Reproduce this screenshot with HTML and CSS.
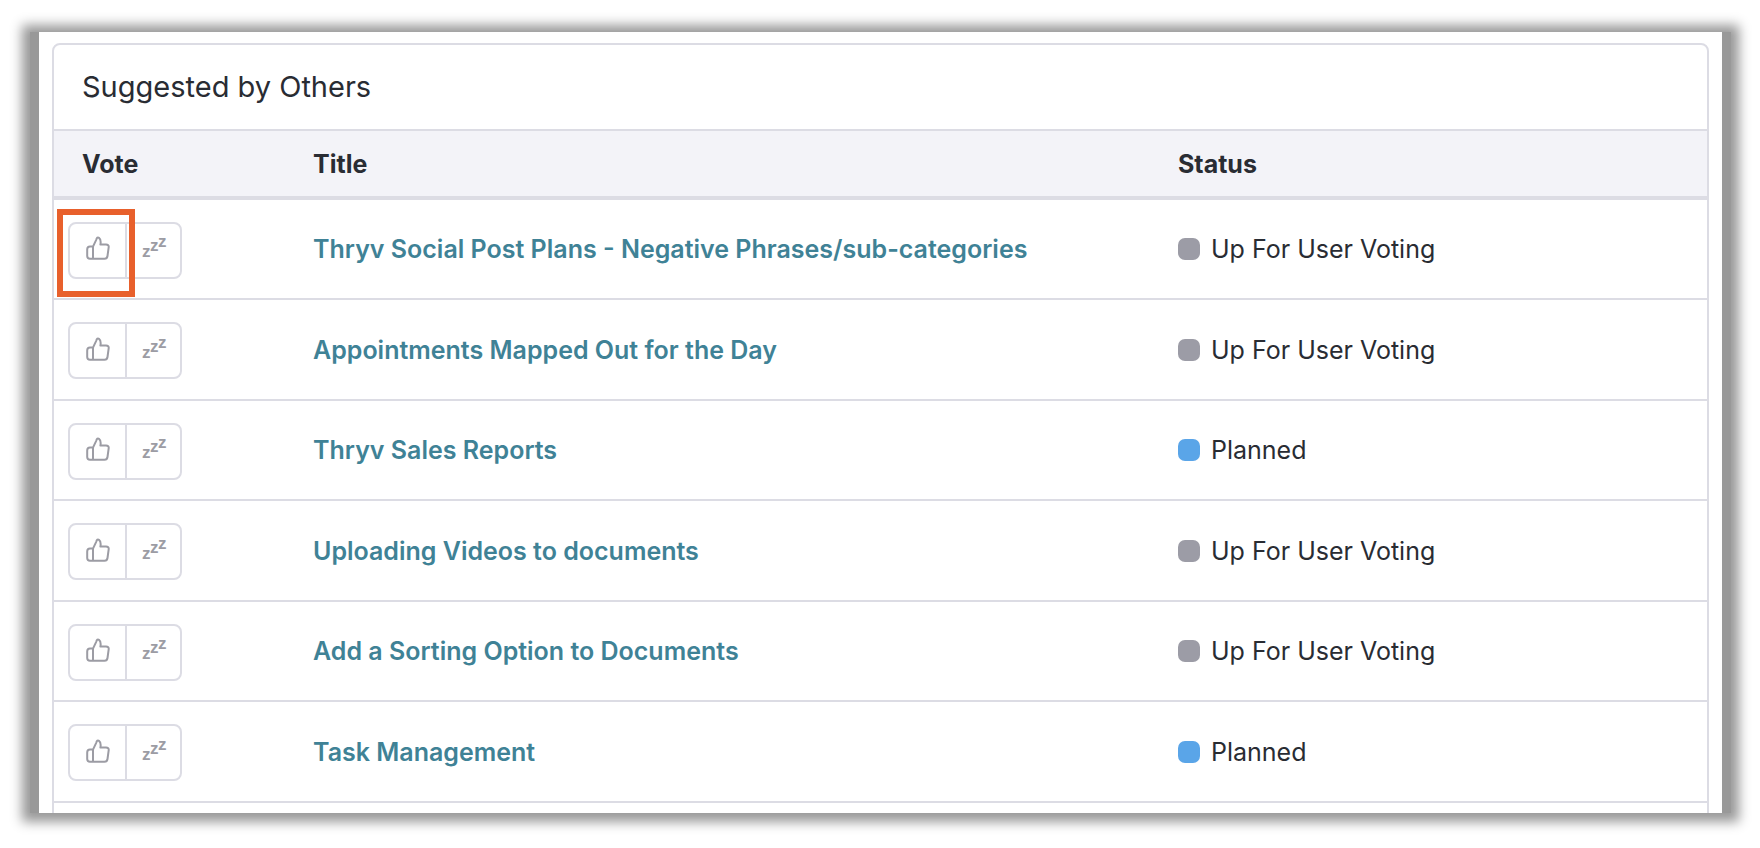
FILE: index.html
```html
<!DOCTYPE html>
<html lang="en">
<head>
    <meta charset="UTF-8">
    <meta name="viewport" content="width=device-width, initial-scale=1.0">
    <title>Suggested by Others</title>
    <link rel="stylesheet" href="styles.css">
</head>
<body>

    <!-- Thumb icon shared by every row -->
    <svg class="sprite" aria-hidden="true">
        <symbol id="thumb" viewBox="0 0 24 24">
            <path d="M7 10.6L10.3 3.6C10.8 1.6 11.8 1 13 1.8C14.8 3 15 5.2 14.4 8.6H20C22 8.6 22.9 9.6 22.7 11.2L21.5 20C21.2 22 20.3 22.7 18.5 22.7H4C2 22.7 1.2 21.7 1.2 20V13.4C1.2 11.4 2 10.6 4 10.6H7V22.7"/>
        </symbol>
    </svg>

    <main class="panel">
        <section class="card">
            <h1>Suggested by Others</h1>
            <table>
                <thead>
                    <tr>
                        <th class="col-vote">Vote</th>
                        <th>Title</th>
                        <th class="col-status">Status</th>
                    </tr>
                </thead>
                <tbody>
                    <tr>
                        <td class="vote">
                            <div class="vote-group highlighted">
                                <button type="button" aria-label="Vote up"><svg class="icon"><use href="#thumb"/></svg></button>
                                <button type="button" aria-label="Snooze"><svg class="icon zzz" viewBox="0 0 26 24"><text x="1" y="21">z</text><text x="9" y="15">z</text><text x="17" y="11">z</text></svg></button>
                            </div>
                        </td>
                        <td><a href="#">Thryv Social Post Plans - Negative Phrases/sub-categories</a></td>
                        <td><span class="status">Up For User Voting</span></td>
                    </tr>
                    <tr>
                        <td class="vote">
                            <div class="vote-group">
                                <button type="button" aria-label="Vote up"><svg class="icon"><use href="#thumb"/></svg></button>
                                <button type="button" aria-label="Snooze"><svg class="icon zzz" viewBox="0 0 26 24"><text x="1" y="21">z</text><text x="9" y="15">z</text><text x="17" y="11">z</text></svg></button>
                            </div>
                        </td>
                        <td><a href="#">Appointments Mapped Out for the Day</a></td>
                        <td><span class="status">Up For User Voting</span></td>
                    </tr>
                    <tr>
                        <td class="vote">
                            <div class="vote-group">
                                <button type="button" aria-label="Vote up"><svg class="icon"><use href="#thumb"/></svg></button>
                                <button type="button" aria-label="Snooze"><svg class="icon zzz" viewBox="0 0 26 24"><text x="1" y="21">z</text><text x="9" y="15">z</text><text x="17" y="11">z</text></svg></button>
                            </div>
                        </td>
                        <td><a href="#">Thryv Sales Reports</a></td>
                        <td><span class="status planned">Planned</span></td>
                    </tr>
                    <tr>
                        <td class="vote">
                            <div class="vote-group">
                                <button type="button" aria-label="Vote up"><svg class="icon"><use href="#thumb"/></svg></button>
                                <button type="button" aria-label="Snooze"><svg class="icon zzz" viewBox="0 0 26 24"><text x="1" y="21">z</text><text x="9" y="15">z</text><text x="17" y="11">z</text></svg></button>
                            </div>
                        </td>
                        <td><a href="#">Uploading Videos to documents</a></td>
                        <td><span class="status">Up For User Voting</span></td>
                    </tr>
                    <tr>
                        <td class="vote">
                            <div class="vote-group">
                                <button type="button" aria-label="Vote up"><svg class="icon"><use href="#thumb"/></svg></button>
                                <button type="button" aria-label="Snooze"><svg class="icon zzz" viewBox="0 0 26 24"><text x="1" y="21">z</text><text x="9" y="15">z</text><text x="17" y="11">z</text></svg></button>
                            </div>
                        </td>
                        <td><a href="#">Add a Sorting Option to Documents</a></td>
                        <td><span class="status">Up For User Voting</span></td>
                    </tr>
                    <tr>
                        <td class="vote">
                            <div class="vote-group">
                                <button type="button" aria-label="Vote up"><svg class="icon"><use href="#thumb"/></svg></button>
                                <button type="button" aria-label="Snooze"><svg class="icon zzz" viewBox="0 0 26 24"><text x="1" y="21">z</text><text x="9" y="15">z</text><text x="17" y="11">z</text></svg></button>
                            </div>
                        </td>
                        <td><a href="#">Task Management</a></td>
                        <td><span class="status planned">Planned</span></td>
                    </tr>
                    <tr>
                        <td></td>
                        <td></td>
                        <td></td>
                    </tr>
                </tbody>
            </table>
        </section>
    </main>

</body>
</html>
```

FILE: styles.css
```css
*,
*::before,
*::after {
    margin: 0;
    padding: 0;
    box-sizing: border-box;
}

body {
    font-family: Inter, sans-serif;
    font-size: 25px;
    line-height: 32px;
    color: #292c33;
    background-color: #fff;
    overflow: hidden;
}

.sprite {
    position: absolute;
    width: 0;
    height: 0;
}

/* Panel with the grey frame, clips the end of the list */
.panel {
    height: calc(100vh - 67px);
    margin: 32px 29px 35px 30px;
    padding: 11px 13px 0;
    border: solid #999;
    border-width: 0 9px;
    box-shadow: 0 1px 11px 8px #999;
    overflow: hidden;
}

.card {
    border: 2px solid #dcdce4;
    border-radius: 8px;
    overflow: hidden;
}

h1 {
    padding: 26px 28px;
    font-size: 29px;
    font-weight: 400;
}

/* Table */
table {
    width: 100%;
    table-layout: fixed;
    border-spacing: 0;
}

th,
td {
    padding: 0 28px;
    text-align: left;
    vertical-align: middle;
    border-bottom: 2px solid #dcdce4;
}

th {
    height: 71px;
    font-weight: 700;
    background-color: #f3f3f8;
    border-top: 2px solid #dcdce4;
    border-bottom-width: 4px;
}

td {
    height: 100px;
}

tr:nth-child(even) td {
    height: 101px;
}

.col-vote {
    width: 231px;
}

.col-status {
    width: 557px;
}

td a {
    color: #3f8296;
    font-weight: 600;
    text-decoration: none;
}

td a:hover {
    text-decoration: underline;
}

/* Vote buttons */
td.vote {
    padding: 2px 14px 0;
}

.vote-group {
    display: inline-flex;
    position: relative;
    vertical-align: middle;
    border: 2px solid #dcdce4;
    border-radius: 8px;
}

.vote-group button {
    display: flex;
    align-items: center;
    justify-content: center;
    width: 55px;
    height: 53px;
    padding-bottom: 4px;
    border: none;
    background: none;
    cursor: pointer;
}

.vote-group button + button {
    border-left: 2px solid #dcdce4;
}

/* Orange marker around the first thumb */
.highlighted::after {
    content: "";
    position: absolute;
    top: -15px;
    left: -13px;
    width: 78px;
    height: 88px;
    border: 6px solid #e8602c;
    pointer-events: none;
}

.icon {
    width: 24px;
    height: 24px;
    fill: none;
    stroke: #9c9ca4;
    stroke-width: 2;
    stroke-linejoin: round;
}

.zzz {
    width: 26px;
    fill: #9c9ca4;
    stroke: none;
    font-size: 17px;
    font-weight: 700;
    overflow: visible;
}

/* Status */
.status {
    display: flex;
    align-items: center;
    gap: 11px;
}

.status::before {
    content: "";
    width: 22px;
    height: 22px;
    border-radius: 7px;
    background-color: #9c9ca6;
}

.planned::before {
    background-color: #5aa5e8;
}
```
